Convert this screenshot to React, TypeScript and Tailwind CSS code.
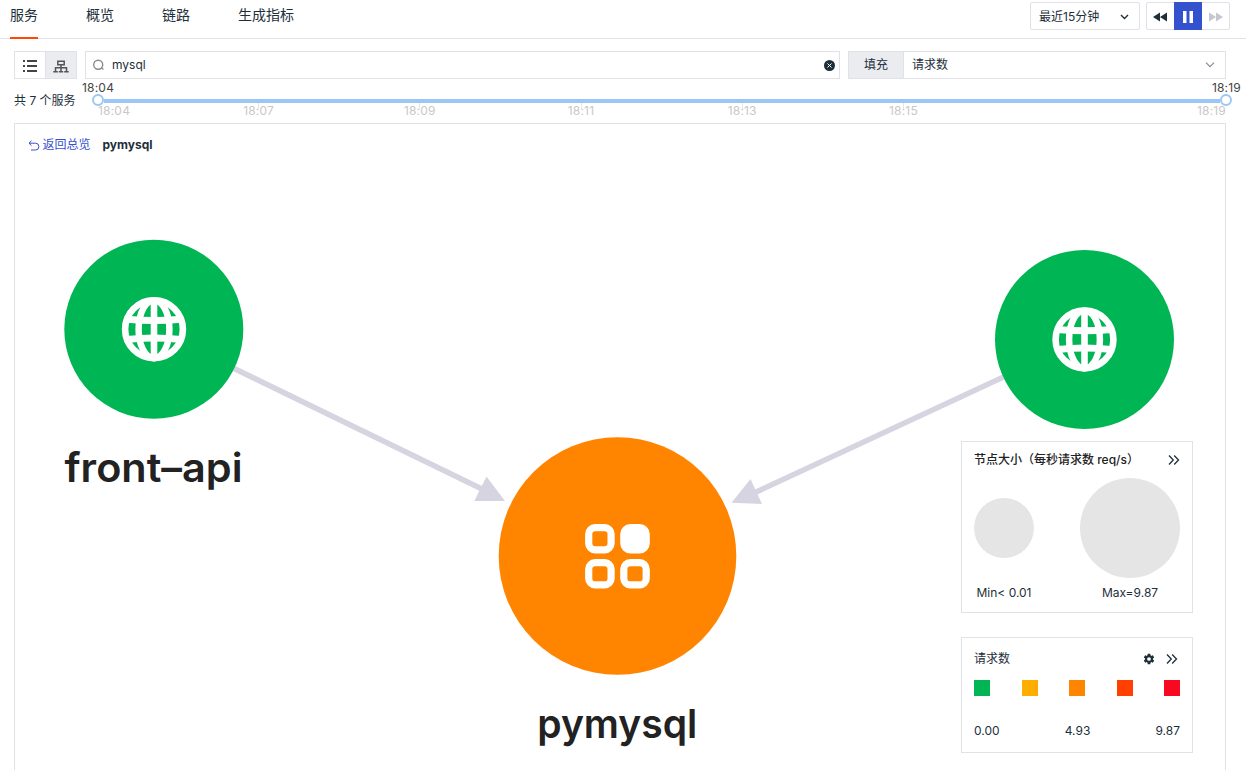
import React from "react";

const TABS = ["服务", "概览", "链路", "生成指标"];
const MARKS = ["18:07", "18:09", "18:11", "18:13", "18:15"];

function Globe({ x, y }: { x: number; y: number }) {
  return (
    <g transform={`translate(${x} ${y})`} fill="none" stroke="#fff" strokeWidth="6.6">
      <circle r="28.900" />
      <ellipse rx="15.400" ry="29" strokeWidth="6.500" />
      <path d="M0-29V29" />
      <path d="M-27-10Q0-7.200 27-10M-27 10.200Q0 7.200 27 10.200" strokeWidth="7" />
    </g>
  );
}

function Chevrons() {
  return (
    <svg width="12" height="12" viewBox="0 0 12 12" fill="none" stroke="#1d2f3a" strokeWidth="1.3">
      <path d="M1 1.500 5.300 6 1 10.500M6.200 1.500 10.500 6 6.200 10.500" />
    </svg>
  );
}

function Gear() {
  return (
    <svg width="12" height="12" viewBox="1 1 22 22" fill="#1d2f3a">
      <path d="M19.140 12.940c.04-.3.06-.61.06-.94s-.02-.64-.07-.94l2.030-1.580a.49.49 0 0 0 .12-.61l-1.920-3.320a.49.49 0 0 0-.59-.22l-2.390.96a7 7 0 0 0-1.620-.94L14.400 2.810a.48.48 0 0 0-.48-.41h-3.840a.47.47 0 0 0-.47.41l-.36 2.540a7.400 7.400 0 0 0-1.620.94l-2.390-.96a.48.48 0 0 0-.59.22L2.740 8.870a.47.47 0 0 0 .12.61l2.030 1.580a6 6 0 0 0 0 1.880l-2.030 1.580a.49.49 0 0 0-.12.61l1.920 3.320c.12.22.37.29.59.22l2.390-.96c.5.38 1.030.7 1.620.94l.36 2.540c.05.24.24.41.48.41h3.840c.24 0 .44-.17.47-.41l.36-2.540a7 7 0 0 0 1.620-.94l2.390.96c.22.08.47 0 .59-.22l1.920-3.320a.47.47 0 0 0-.12-.61zM12 15.400a3.400 3.400 0 1 1 0-6.800 3.400 3.400 0 0 1 0 6.800" />
    </svg>
  );
}

function ServiceMap() {
  return (
    <svg className="absolute -left-px -top-px" width="1212" height="647" viewBox="14 123 1212 647">
      <g stroke="#d6d4e0" strokeWidth="5.500" fill="none">
        <path d="M154 329.500 484 490" />
        <path d="M1084 339.500 754 493" />
      </g>
      <g fill="#d6d4e0">
        <path d="M505 501H474.300L486.500 476.500Z" />
        <path d="M731.500 502.700 750.500 479 762 504Z" />
      </g>
      <circle cx="153.800" cy="329.200" r="89.500" fill="#00b553" />
      <circle cx="1084.500" cy="339.500" r="89.500" fill="#00b553" />
      <circle cx="617.500" cy="556" r="118.800" fill="#ff8400" />
      <Globe x={154} y={329.200} />
      <Globe x={1084.500} y={339.400} />
      <g fill="none" stroke="#fff" strokeWidth="7.200">
        <rect x="588.700" y="527.600" width="22.400" height="22.200" rx="6.500" />
        <rect x="623.800" y="527.600" width="22.400" height="22.200" rx="6.500" fill="#fff" />
        <rect x="588.700" y="562.700" width="22.400" height="22.200" rx="6.500" />
        <rect x="623.800" y="562.700" width="22.400" height="22.200" rx="6.500" />
      </g>
      <g fill="#222" fontSize="40" fontWeight="600" textAnchor="middle">
        <text x="153.500" y="482.300" textLength="178" lengthAdjust="spacingAndGlyphs">front–api</text>
        <text x="617.300" y="738.300" textLength="160" lengthAdjust="spacingAndGlyphs">pymysql</text>
      </g>
    </svg>
  );
}

export default function App() {
  return (
    <div className="flex h-[770px] w-[1246px] flex-col overflow-hidden bg-white text-xs leading-4 text-[#1d2f3a] [font-family:Inter,'Noto_Sans_CJK_SC',sans-serif]">
      <header className="flex h-[39px] shrink-0 justify-between border-b border-[#e1e1e8] pl-[10px] pr-4">
        <nav className="flex gap-12 text-sm leading-[30px]">
          {TABS.map((t, i) => (
            <div key={t} className={i === 0 ? "h-[39px] border-b-2 border-[#ff4a00]" : "h-[39px]"}>
              {t}
            </div>
          ))}
        </nav>
        <div className="flex gap-[6px] pt-[2px]">
          <button className="flex h-7 w-[110px] items-center justify-between rounded-[2px] border border-[#e1e1e8] pl-2 pr-[10px] pt-px">
            最近15分钟
            <svg width="9" height="6" viewBox="0 0 9 6" fill="none" stroke="#1d2f3a" strokeWidth="1.400">
              <path d="m1 1 3.500 3.500L8 1" />
            </svg>
          </button>
          <div className="flex h-7 w-[84px] rounded-[2px] border border-[#e1e1e8]">
            <button className="grid w-[27px] place-items-center pr-px pt-px">
              <svg width="14" height="10" viewBox="0 0 14 10" fill="#1d2f3a">
                <path d="M7 .5v9L0 5ZM14 .5v9L7 5Z" />
              </svg>
            </button>
            <button className="-my-px grid w-7 place-items-center bg-[#3451ce] pt-px">
              <svg width="10" height="12" viewBox="0 0 10 12" fill="#fff">
                <path d="M0 0h3.500v12H0ZM6.500 0H10v12H6.500Z" />
              </svg>
            </button>
            <button className="grid w-[27px] place-items-center pt-px">
              <svg width="14" height="10" viewBox="0 0 14 10" fill="#c5c6cf">
                <path d="M0 .5v9L7 5ZM7 .5v9l7-4.500Z" />
              </svg>
            </button>
          </div>
        </div>
      </header>

      <section className="mt-3 flex h-7 shrink-0 gap-2 px-[14px] pr-5">
        <div className="flex w-[63px] border border-[#e1e1e8]">
          <button className="grid w-[30px] place-items-center pt-[2px]">
            <svg width="14" height="12" viewBox="0 0 14 12" fill="#444">
              <path d="M0 0h2v2H0ZM0 5h2v2H0ZM0 10h2v2H0ZM4 .1h10v1.800H4ZM4 5.100h10v1.800H4ZM4 10.100h10v1.800H4Z" />
            </svg>
          </button>
          <button className="grid flex-1 place-items-center border-l border-[#e1e1e8] bg-[#ebecf0] pt-[2px]">
            <svg width="16" height="13" viewBox="0 0 16 13" fill="none" stroke="#555" strokeWidth="1.500">
              <path d="M4.800 1.200h6.400v3.600H4.800ZM8 4.800v7M2.500 12V7.700h11V12M.3 11.800h4.500M5.800 11.800h4.400M11.200 11.800h4.500" />
            </svg>
          </button>
        </div>
        <div className="flex w-[755px] items-center border border-[#e1e1e8] pl-[7px] pr-1">
          <svg width="11" height="12" viewBox="0 0 11 12" fill="none" stroke="#8a8a8a" strokeWidth="1.400">
            <circle cx="5.200" cy="5.800" r="4.500" />
            <path d="m8.400 8.800 2 1.800" />
          </svg>
          <span className="ml-2 flex-1">mysql</span>
          <svg width="11" height="11" viewBox="0 0 11 11">
            <circle cx="5.500" cy="5.500" r="5.500" fill="#1d2f3a" />
            <path d="m3.500 3.500 4 4m0-4-4 4" stroke="#fff" />
          </svg>
        </div>
        <div className="flex w-[378px] border border-[#e1e1e8]">
          <span className="grid w-[55px] place-items-center border-r border-[#e1e1e8] bg-[#ebecf0]">填充</span>
          <span className="flex flex-1 items-center justify-between pl-2 pr-[10px]">
            请求数
            <svg width="10" height="6" viewBox="0 0 10 6" fill="none" stroke="#858b96" strokeWidth="1.200">
              <path d="m1 .7 4 4 4-4" />
            </svg>
          </span>
        </div>
      </section>

      <section className="flex h-11 shrink-0 pl-[14px]">
        <span className="w-[68px] pt-[14px]">共 7 个服务</span>
        <div className="flex w-[1160px] flex-col">
          <div className="flex h-[17px] justify-between pr-px pt-px tracking-[0.2px] text-[#444]">
            <span>18:04</span>
            <span>18:19</span>
          </div>
          <div className="-mt-[2px] flex h-3 items-center px-[10px]">
            <span className="h-3 w-3 rounded-full border-2 border-[#9cc6f5] bg-white" />
            <span className="mt-px h-1 flex-1 bg-[#9cc6f5]" />
            <span className="h-3 w-3 rounded-full border-2 border-[#9cc6f5] bg-white" />
          </div>
          <div className="-mt-[3px] flex pl-4 pr-4 tracking-[0.2px] text-[#c8c8c8]">
            <span className="w-[80px]">18:04</span>
            {MARKS.map((m) => (
              <span key={m} className="flex-1 bg-[linear-gradient(#e5e5e5,#e5e5e5)] bg-size-[1px_6px] bg-top bg-no-repeat text-center">
                {m}
              </span>
            ))}
            <span className="w-[242px] text-right">18:19</span>
          </div>
        </div>
      </section>

      <main className="relative mx-[14px] mr-5 h-[647px] shrink-0 border border-b-0 border-[#e1e1e8]">
        <ServiceMap />
        <div className="relative flex items-center pl-[12.5px] pt-[13px]">
          <svg width="12" height="11" viewBox="0 0 12 11" fill="none" stroke="#3451ce" strokeWidth="1">
            <path d="M3.500.8 1 3.200l2.500 2.400M1 3.200h6.500a3.400 3.400 0 0 1 0 6.800H3" />
          </svg>
          <span className="ml-[3px] text-[#3451ce]">返回总览</span>
          <b className="ml-3 font-bold">pymysql</b>
        </div>

        <aside className="absolute right-8 top-[317px] flex w-[232px] flex-col gap-6">
          <div className="flex h-[172px] flex-col border border-[#e1e1e8] bg-white px-3 pt-[10px]">
            <div className="flex items-center justify-between font-medium text-[#222]">
              节点大小（每秒请求数 req/s）
              <Chevrons />
            </div>
            <div className="mt-[10px] flex items-center justify-between">
              <span className="h-[60px] w-[60px] rounded-full bg-[#e5e5e5]" />
              <span className="h-[100px] w-[100px] rounded-full bg-[#e5e5e5]" />
            </div>
            <div className="mt-[7px] flex justify-between">
              <span className="w-[60px] text-center">Min&lt; 0.01</span>
              <span className="w-[100px] text-center">Max=9.87</span>
            </div>
          </div>
          <div className="flex h-[116px] flex-col border border-[#e1e1e8] bg-white px-3 pt-[13px]">
            <div className="flex items-center">
              <span className="flex-1">请求数</span>
              <Gear />
              <span className="ml-[11px] mr-[2px]">
                <Chevrons />
              </span>
            </div>
            <div className="mt-[13px] flex justify-between">
              <i className="h-4 w-4 bg-[#00b553]" />
              <i className="h-4 w-4 bg-[#ffae00]" />
              <i className="h-4 w-4 bg-[#ff8400]" />
              <i className="h-4 w-4 bg-[#ff4000]" />
              <i className="h-4 w-4 bg-[#f80821]" />
            </div>
            <div className="mt-[27px] flex justify-between">
              <span>0.00</span>
              <span>4.93</span>
              <span>9.87</span>
            </div>
          </div>
        </aside>
      </main>
    </div>
  );
}
